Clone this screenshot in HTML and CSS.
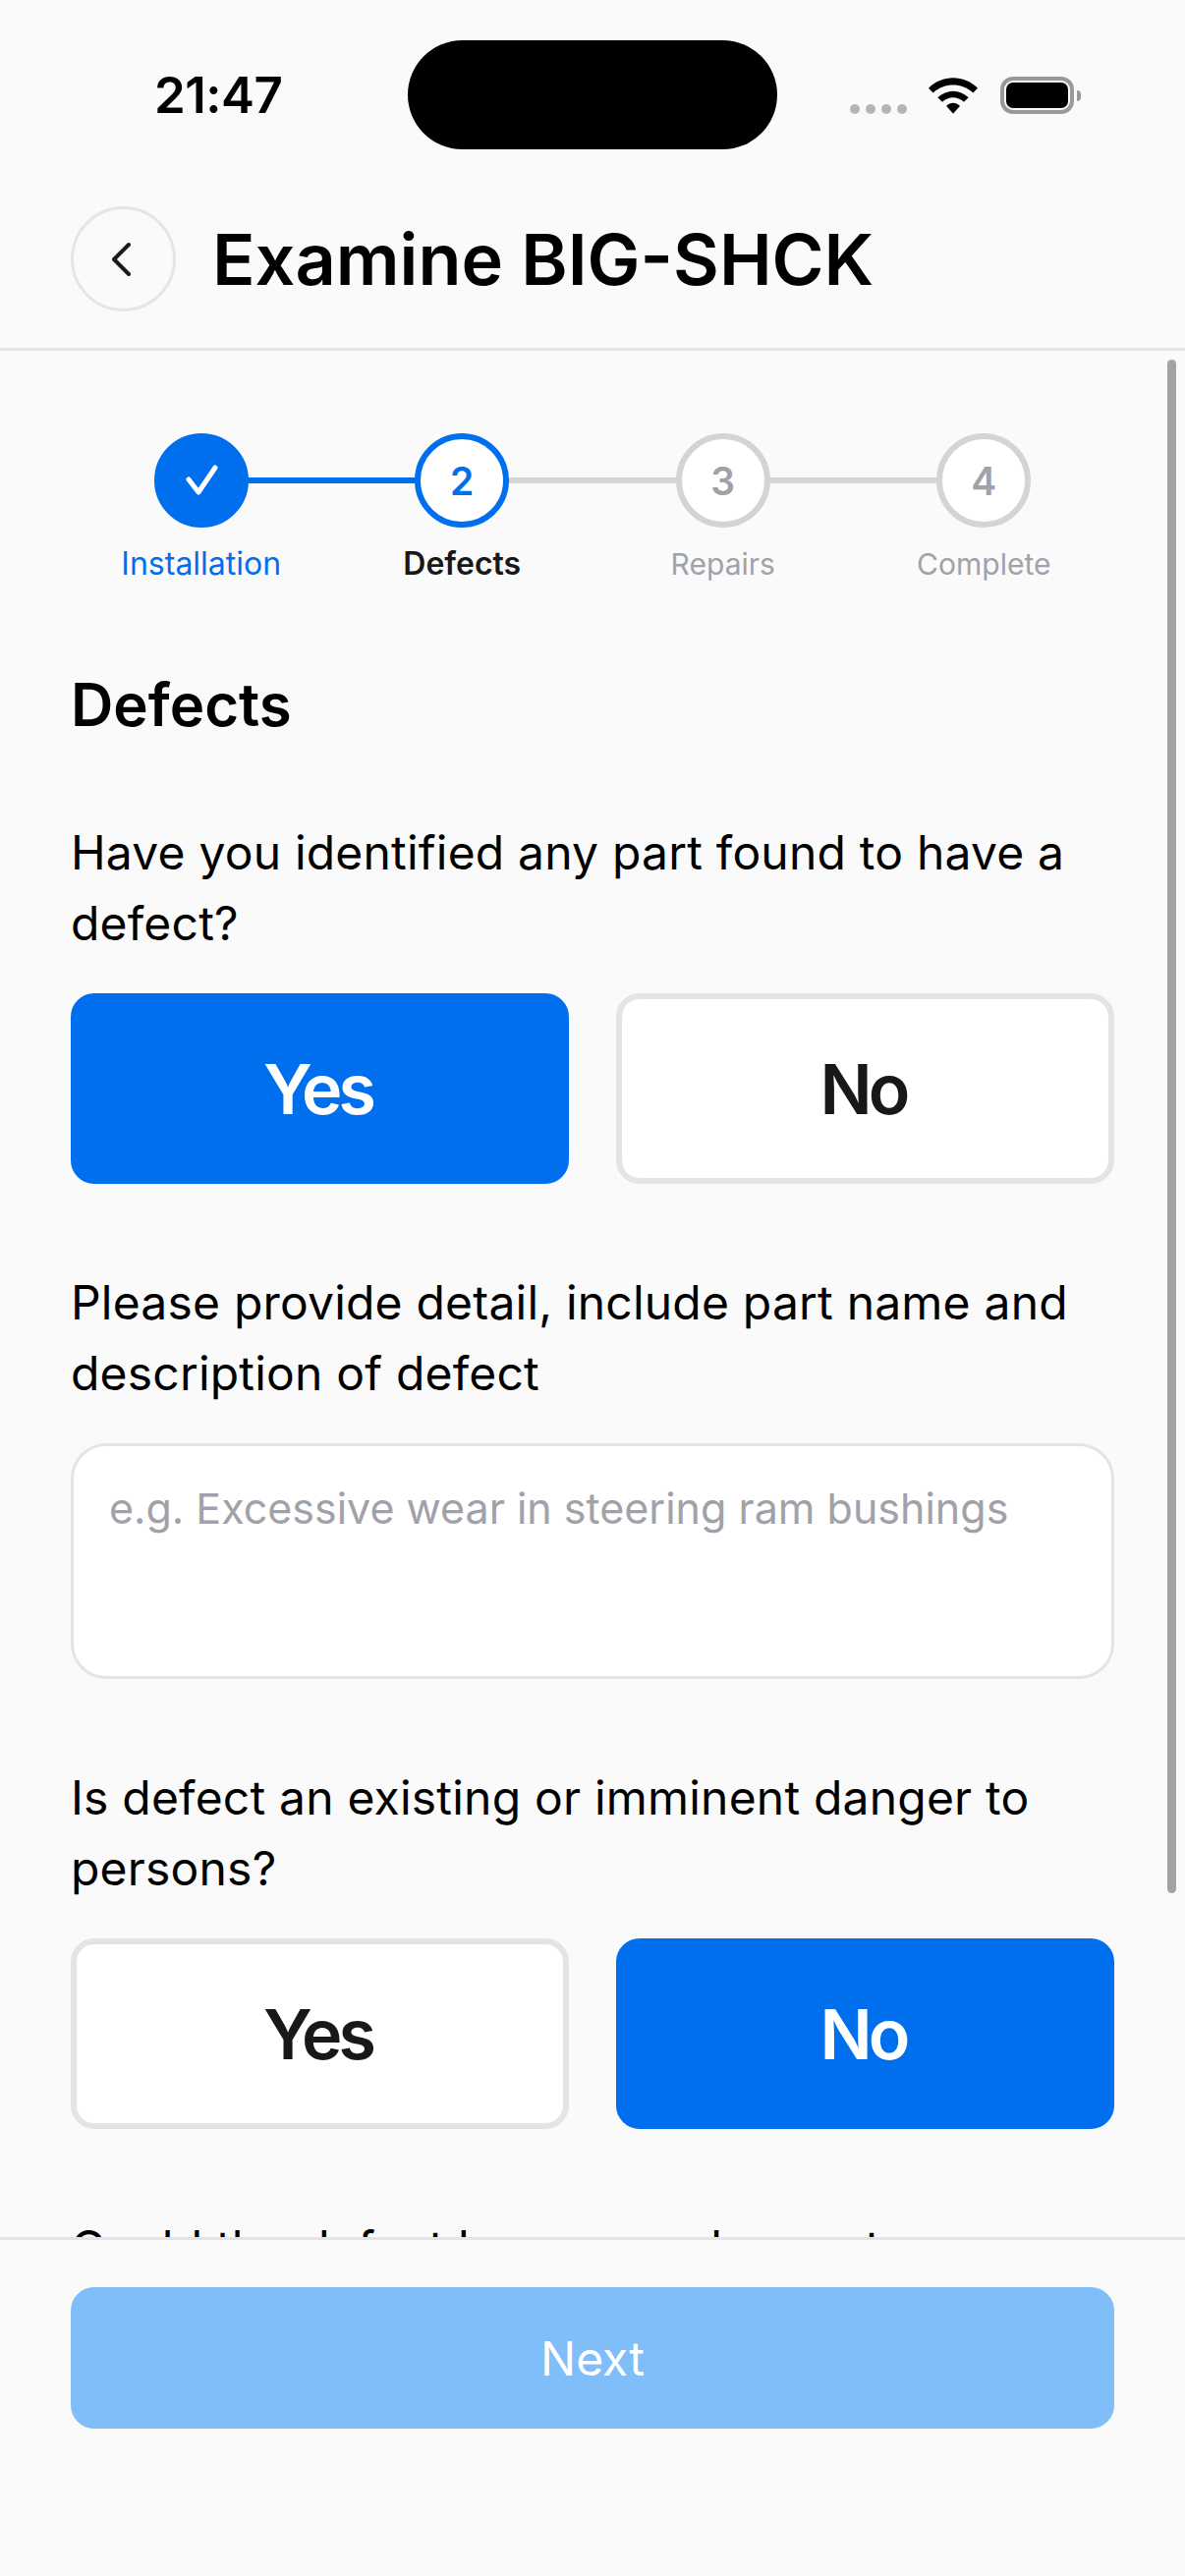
FILE: index.html
```html
<!DOCTYPE html>
<html lang="en">
<head>
<meta charset="utf-8">
<title>Examine BIG-SHCK</title>
<link rel="stylesheet" href="styles.css">
</head>
<body>
<div class="app">
  <div class="status">
    <span class="time">21:47</span>
    <div class="island"></div>
    <div class="status-icons">
      <div class="signal"><i></i><i></i><i></i><i></i></div>
      <svg class="wifi" viewBox="0 0 150 110"><path d="M0 32C40-10 110-10 150 32L136 46C100 14 50 14 14 46Z"/><path d="M28 60C55 34 95 34 122 60L108 74C88 56 62 56 42 74Z"/><path d="M54 86C68 74 82 74 96 86L75 110Z"/></svg>
      <div class="battery"><div class="battery-fill"></div><div class="battery-cap"></div></div>
    </div>
  </div>
  <header class="header">
    <button class="back" aria-label="Back">
      <svg viewBox="0 0 24 36" class="chev"><path d="M20 3 5 18 20 33"/></svg>
    </button>
    <h1 class="title">Examine BIG-SHCK</h1>
  </header>
  <main class="content">
    <div class="scrollbar"></div>
    <ol class="stepper">
      <li class="step done"><div class="dot"><svg viewBox="0 0 36 36" class="check"><path d="M5 17 15 30 32 5"/></svg></div><span class="step-label">Installation</span></li>
      <li class="step current"><div class="dot">2</div><span class="step-label">Defects</span></li>
      <li class="step"><div class="dot">3</div><span class="step-label">Repairs</span></li>
      <li class="step"><div class="dot">4</div><span class="step-label">Complete</span></li>
    </ol>
    <h2 class="section">Defects</h2>
    <p class="question">Have you identified any part found to have a defect?</p>
    <div class="choices">
      <button class="choice selected">Yes</button>
      <button class="choice">No</button>
    </div>
    <p class="question">Please provide detail, include part name and description of defect</p>
    <div class="textarea">e.g. Excessive wear in steering ram bushings</div>
    <p class="question">Is defect an existing or imminent danger to persons?</p>
    <div class="choices">
      <button class="choice">Yes</button>
      <button class="choice selected">No</button>
    </div>
    <p class="question">Could the defect become a danger to</p>
  </main>
  <footer class="footer">
    <button class="next">Next</button>
  </footer>
</div>
</body>
</html>
```
FILE: styles.css
```css
* { box-sizing: border-box; }
html, body { margin: 0; padding: 0; }
body { background: #fafafa; font-family: Inter, "Liberation Sans", sans-serif; color: #000; }
.app { width: 1206px; height: 2622px; display: flex; flex-direction: column; overflow: hidden; background: #fafafa; }

.status { position: relative; height: 160px; flex: none; }
.time { position: absolute; left: 157px; top: 66px; font-size: 51px; line-height: 62px; font-weight: 600; letter-spacing: -0.5px; }
.island { position: absolute; left: 415px; top: 41px; width: 376px; height: 111px; background: #000; border-radius: 56px; }
.status-icons { position: absolute; left: 865px; top: 78px; width: 240px; height: 38px; }
.signal { position: absolute; left: 0; top: 28px; display: flex; gap: 6px; }
.signal i { display: block; width: 10px; height: 10px; border-radius: 50%; background: #b5b5b5; }
.wifi { position: absolute; left: 80px; top: 1px; width: 50px; height: 37px; fill: #000; }
.battery { position: absolute; left: 153px; top: 0; width: 75px; height: 38px; border: 4px solid #999; border-radius: 13px; padding: 2px; }
.battery-fill { width: 100%; height: 100%; background: #000; border-radius: 7px; }
.battery-cap { position: absolute; right: -11px; top: 10px; width: 4px; height: 11px; background: #999; border-radius: 0 4px 4px 0; }

.header { flex: none; height: 197px; display: flex; align-items: flex-start; gap: 37px; padding: 50px 72px 0; border-bottom: 3px solid #e4e4e7; }
.back { width: 107px; height: 107px; flex: none; padding: 0; background: none; border: 3px solid #e5e5e5; border-radius: 50%; display: flex; align-items: center; justify-content: center; }
.chev { width: 24px; height: 36px; fill: none; stroke: #1a1a1a; stroke-width: 4; stroke-linecap: round; stroke-linejoin: round; margin-left: -6px; }
.title { margin: 0; font-size: 72px; line-height: 107px; font-weight: 600; }

.content { position: relative; flex: 1; min-height: 0; overflow: hidden; padding: 84px 72px 0; }
.scrollbar { position: absolute; left: 1188px; top: 9px; width: 9px; height: 1561px; background: #a3a3a3; border-radius: 5px; }

.stepper { list-style: none; margin: 0; padding: 0; display: grid; grid-template-columns: repeat(4, 1fr); }
.step { position: relative; display: flex; flex-direction: column; align-items: center; }
.step:not(:last-child)::after { content: ""; position: absolute; left: 50%; width: 100%; top: 45px; height: 6px; background: #d4d4d4; }
.step.done::after { background: #006fee; }
.dot { position: relative; z-index: 1; width: 96px; height: 96px; border-radius: 50%; border: 6px solid #d4d4d4; background: #fff; display: flex; align-items: center; justify-content: center; font-size: 39px; font-weight: 600; color: #a1a1aa; }
.step.done .dot { background: #006fee; border-color: #006fee; }
.step.current .dot { border-color: #006fee; color: #006fee; }
.check { width: 36px; height: 36px; fill: none; stroke: #fff; stroke-width: 5; stroke-linecap: round; stroke-linejoin: round; }
.step-label { margin-top: 16px; font-size: 30px; line-height: 42px; color: #a1a1aa; }
.step.done .step-label { color: #006fee; font-size: 32px; }
.step.current .step-label { color: #18181b; font-weight: 600; font-size: 32px; }

.section { margin: 86px 0 0; font-size: 60px; line-height: 72px; font-weight: 600; }
.question { margin: 85px 0 0; font-size: 48px; line-height: 72px; font-weight: 400; letter-spacing: 0.2px; }
.section + .question { margin-top: 79px; }
.choices { margin-top: 35px; display: flex; gap: 48px; }
.choice { flex: 1; height: 194px; padding: 0 4px 0 0; font: 600 70px Inter, "Liberation Sans", sans-serif; letter-spacing: -4px; background: #fff; color: #18181b; border: 6px solid #e4e4e7; border-radius: 24px; }
.choice.selected { background: #006fee; border-color: #006fee; color: #fff; }
.textarea { margin-top: 35px; height: 240px; padding: 27px 36px; background: #fff; border: 3px solid #e4e4e7; border-radius: 36px; font-size: 43px; line-height: 72px; white-space: nowrap; color: #a1a1aa; }

.footer { position: relative; flex: none; height: 345px; padding: 48px 72px 0; background: #fafafa; border-top: 3px solid #e4e4e7; }
.next { display: block; width: 100%; height: 144px; padding: 0; background: #7fbef9; color: #fff; border: 0; border-radius: 24px; font: 400 48px Inter, "Liberation Sans", sans-serif; }
```
